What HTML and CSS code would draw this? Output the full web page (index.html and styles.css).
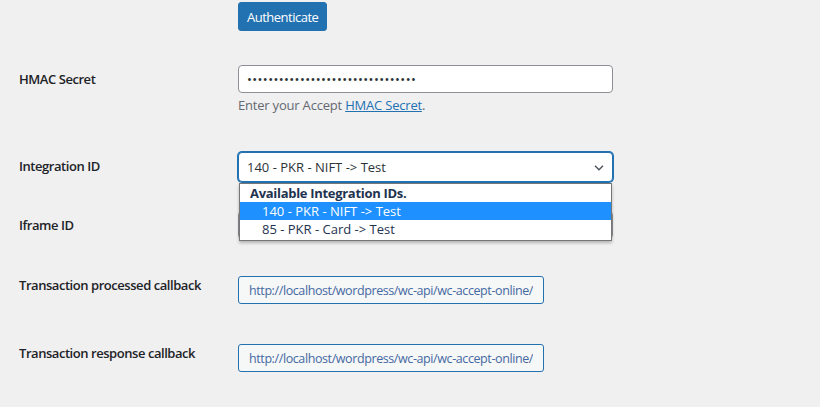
FILE: index.html
```html
<!DOCTYPE html>
<html lang="en">
<head>
    <meta charset="UTF-8">
    <meta name="viewport" content="width=device-width, initial-scale=1.0">
    <title>Accept Online Settings</title>
    <link rel="stylesheet" href="styles.css">
</head>
<body>
    <div class="wc-settings">
        <!-- Authenticate -->
        <div class="form-row row-auth">
            <div class="form-label"></div>
            <div class="form-field">
                <button type="button" class="btn-primary">Authenticate</button>
            </div>
        </div>

        <!-- HMAC secret -->
        <div class="form-row row-hmac">
            <label class="form-label" for="hmac">HMAC Secret</label>
            <div class="form-field">
                <input type="password" id="hmac" class="input-text" value="abcdefghijklmnopqrstuvwxyz012345">
                <p class="description">Enter your Accept <a href="#">HMAC Secret</a>.</p>
            </div>
        </div>

        <!-- Integration ID (select open) -->
        <div class="form-row row-integration">
            <label class="form-label">Integration ID</label>
            <div class="form-field">
                <div class="select-box is-open">
                    <div class="select-current">
                        <span>140 - PKR - NIFT -&gt; Test</span>
                        <svg class="select-arrow" width="10" height="6" viewBox="0 0 10 6">
                            <path d="M1 0.8 L5 4.8 L9 0.8" fill="none" stroke="#50575e" stroke-width="1.5"/>
                        </svg>
                    </div>
                    <ul class="select-menu">
                        <li class="select-group">Available Integration IDs.</li>
                        <li class="select-option is-active">140 - PKR - NIFT -&gt; Test</li>
                        <li class="select-option">85 - PKR - Card -&gt; Test</li>
                    </ul>
                </div>
            </div>
        </div>

        <!-- Iframe ID -->
        <div class="form-row row-iframe">
            <label class="form-label" for="iframe">Iframe ID</label>
            <div class="form-field">
                <input type="text" id="iframe" class="input-text" value="">
            </div>
        </div>

        <!-- Callbacks -->
        <div class="form-row row-callback">
            <label class="form-label label-top">Transaction processed callback</label>
            <div class="form-field">
                <input type="text" class="input-url" readonly value="http://localhost/wordpress/wc-api/wc-accept-online/">
            </div>
        </div>

        <div class="form-row row-callback-2">
            <label class="form-label label-top">Transaction response callback</label>
            <div class="form-field">
                <input type="text" class="input-url" readonly value="http://localhost/wordpress/wc-api/wc-accept-online/">
            </div>
        </div>
    </div>
</body>
</html>
```

FILE: styles.css
```css
body {
    margin: 0;
    background: #f0f0f1;
    color: #1d2327;
    font-family: "Open Sans", "Noto Sans", sans-serif;
    font-size: 13px;
}

.wc-settings {
    padding: 2px 0 0 19px;
}

.form-row {
    display: grid;
    grid-template-columns: 219px auto;
    align-items: start;
}

.row-hmac { margin-top: 34px; }
.row-integration { margin-top: 38px; }
.row-iframe { margin-top: 29px; }
.row-callback { margin-top: 37px; }
.row-callback-2 { margin-top: 40px; }

.form-label {
    display: block;
    padding-top: 5px;
    font-size: 13px;
    font-weight: 600;
    line-height: 18px;
    letter-spacing: -0.45px;
    color: #1d2327;
}

.form-label.label-top {
    padding-top: 0;
}

.form-field {
    position: relative;
}

.btn-primary {
    display: block;
    height: 29px;
    padding: 0 8px;
    background: #2271b1;
    border: 1px solid #2271b1;
    border-radius: 3px;
    color: #fff;
    font-family: "Open Sans", "Noto Sans", sans-serif;
    font-size: 13px;
    letter-spacing: -0.5px;
    cursor: pointer;
}

.input-text {
    display: block;
    box-sizing: border-box;
    width: 375px;
    height: 28px;
    margin: 0;
    padding: 0 8px;
    background: #fff;
    border: 1px solid #8c8f94;
    border-radius: 4px;
    color: #2c3338;
    font-family: "Open Sans", "Noto Sans", sans-serif;
    font-size: 13px;
    letter-spacing: 0.4px;
    outline: none;
}

.description {
    margin: 3px 0 0;
    line-height: 18px;
    color: #646970;
    letter-spacing: -0.2px;
}

.description a {
    color: #2271b1;
    text-decoration: underline;
}

/* select shown open, with its native-looking list */
.select-box {
    position: relative;
    width: 375px;
}

.select-current {
    box-sizing: border-box;
    height: 30px;
    display: flex;
    align-items: center;
    justify-content: space-between;
    padding: 0 8px;
    background: #fff;
    border: 1px solid #2271b1;
    border-radius: 4px;
    box-shadow: 0 0 0 1px #2271b1;
    color: #2c3338;
    font-size: 13px;
}

.select-arrow {
    margin-top: 2px;
}

.select-menu {
    position: absolute;
    top: 31px;
    left: 1px;
    right: 1px;
    z-index: 5;
    margin: 0;
    padding: 0 0 2px;
    list-style: none;
    background: #fff;
    border: 1px solid #767676;
    box-shadow: 0 2px 3px rgba(0, 0, 0, 0.25);
    color: #1e3350;
}

.select-group {
    height: 18px;
    line-height: 18px;
    padding-left: 10px;
    font-weight: 700;
    letter-spacing: -0.3px;
}

.select-option {
    height: 18px;
    line-height: 18px;
    padding-left: 22px;
}

.select-option.is-active {
    background: #1e90ff;
    color: #fff;
}

.input-url {
    display: block;
    box-sizing: border-box;
    width: 306px;
    height: 28px;
    margin: 0;
    padding: 0 10px;
    background: #f6f7f7;
    border: 1px solid #2271b1;
    border-radius: 3px;
    color: #4569a3;
    font-family: "Open Sans", "Noto Sans", sans-serif;
    font-size: 12.5px;
    letter-spacing: -0.4px;
    outline: none;
}
```
